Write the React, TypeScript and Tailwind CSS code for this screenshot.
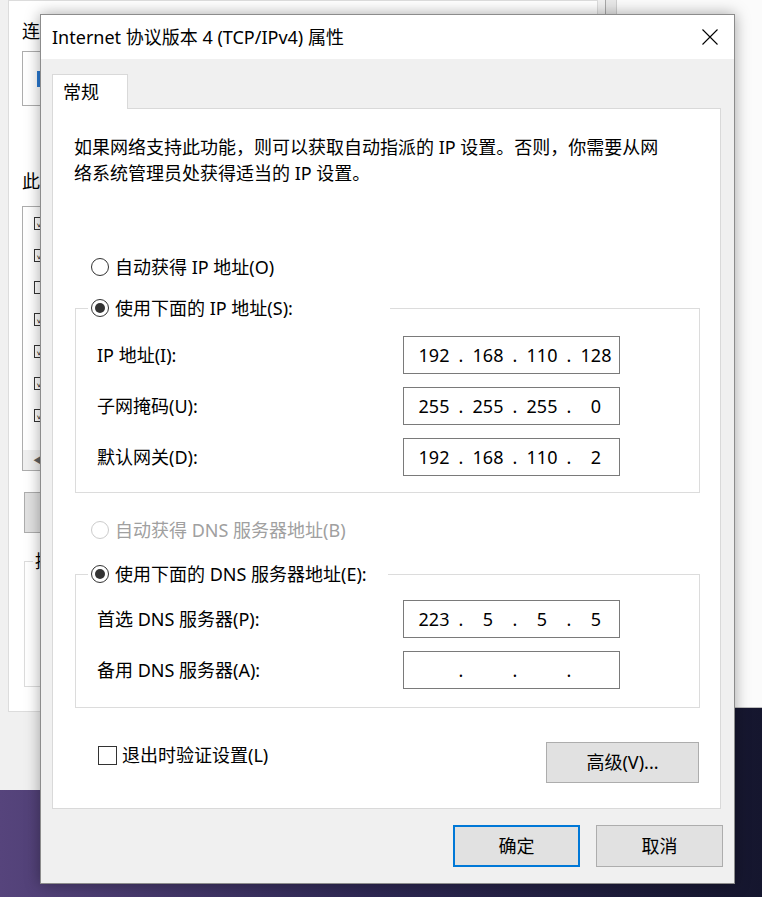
import React from 'react';

// Windows 10 style "Internet 协议版本 4" properties dialog, over a partly hidden adapter window

const font = "font-['Noto_Sans','Noto_Sans_CJK_SC',sans-serif]";

const Radio: React.FC<{ checked?: boolean; disabled?: boolean }> = ({ checked, disabled }) => (
    <span
        className={
            disabled
                ? 'w-[18px] h-[18px] shrink-0 rounded-full border border-[#cccccc] bg-white'
                : 'w-[18px] h-[18px] shrink-0 rounded-full border border-[#333333] bg-white flex items-center justify-center'
        }
    >
        {checked && <span className="w-[10px] h-[10px] rounded-full bg-[#333333]" />}
    </span>
);

const IpField: React.FC<{ parts: string[] }> = ({ parts }) => (
    <div className="w-[217px] h-[38px] shrink-0 border border-[#7a7a7a] bg-white flex items-center pl-[10px] text-[18px] text-black">
        {parts.map((p, i) => (
            <React.Fragment key={i}>
                {i > 0 && <span className="w-[14px] text-center">.</span>}
                <span className="w-[40px] text-center">{p}</span>
            </React.Fragment>
        ))}
    </div>
);

const FieldRow: React.FC<{ label: string; parts: string[] }> = ({ label, parts }) => (
    <div className="flex items-center">
        <span className="flex-1">{label}</span>
        <IpField parts={parts} />
    </div>
);

const GroupBox: React.FC<{ legend: string; legendWidth: string; children: React.ReactNode }> = ({ legend, legendWidth, children }) => (
    <fieldset className="ml-[22px] w-[625px] border border-[#dcdcdc] pl-[21px] pr-[79px]">
        <legend className={`-ml-[9px] ${legendWidth} h-[26px] pl-[3px] flex items-center gap-[6px]`}>
            <Radio checked />
            <span>{legend}</span>
        </legend>
        {children}
    </fieldset>
);

const ListCheck: React.FC<{ checked?: boolean }> = ({ checked }) => (
    <div className="h-[32px] flex items-center pl-[11px]">
        <span className="w-[13px] h-[13px] border border-[#333333] bg-white flex items-center justify-center text-[10px] leading-none">
            {checked ? '✓' : ''}
        </span>
    </div>
);

const App: React.FC = () => {
    return (
        <div className={`relative w-[762px] h-[897px] overflow-hidden bg-gradient-to-r from-[#56447c] via-[#2d2752] to-[#15162e] text-black ${font}`}>
            {/* window behind, right */}
            <div className="absolute left-[600px] top-0 w-[170px] h-[708px] bg-[#e8e8e8] border-b border-[#bdbdbd] pl-[16px]">
                <div className="h-full bg-[#fbfbfb] border-l border-[#cfcfcf]" />
            </div>

            {/* adapter properties window behind, left (only its left edge shows) */}
            <div className="absolute left-0 top-0 w-[606px] h-[790px] bg-[#f0f0f0] border-r border-[#a8a8a8] pl-[8px]">
                <div className="w-[590px] h-[712px] bg-white border border-[#dcdcdc] pl-[13px] pt-[17px] text-[18px]">
                    <div className="leading-[26px]">连</div>
                    <div className="mt-[7px] w-[560px] h-[55px] border border-[#adadad] bg-white flex items-center pl-[14px]">
                        <span className="w-[4px] h-[16px] bg-[#2a7ad2]" />
                    </div>
                    <div className="mt-[62px] leading-[26px]">此</div>
                    <div className="mt-[12px] w-[560px] h-[265px] border border-[#adadad] bg-white flex flex-col">
                        <div>
                            <ListCheck checked />
                            <ListCheck checked />
                            <ListCheck />
                            <ListCheck checked />
                            <ListCheck checked />
                            <ListCheck checked />
                            <ListCheck checked />
                        </div>
                        <div className="mt-auto h-[20px] bg-[#f0f0f0] flex items-center pl-[10px] text-[10px] text-[#606060]">◀</div>
                    </div>
                    <div className="mt-[21px] ml-[2px] w-[150px] h-[41px] bg-[#e1e1e1] border border-[#adadad]" />
                    <fieldset className="mt-[18px] ml-[2px] w-[560px] h-[136px] border border-[#dcdcdc]">
                        <legend className="ml-[8px] px-[2px] text-[18px] leading-[20px]">描</legend>
                    </fieldset>
                </div>
            </div>

            {/* dialog */}
            <div className="absolute left-[40px] top-[14px] w-[695px] h-[870px] border border-[#8c8c8c] bg-[#f0f0f0] shadow-[0_0_14px_rgba(0,0,0,0.35)] flex flex-col">
                <div className="h-[45px] bg-white flex items-center justify-between pl-[11px] pr-[16px]">
                    <span className="text-[18px]">Internet 协议版本 4 (TCP/IPv4) 属性</span>
                    <svg width="16" height="16" viewBox="0 0 16 16" className="text-black">
                        <path d="M0.5 0.5 L15.5 15.5 M15.5 0.5 L0.5 15.5" stroke="currentColor" strokeWidth="1.1" fill="none" />
                    </svg>
                </div>

                <div className="flex-1 px-[11px] pt-[15px] pb-[16px] flex flex-col text-[18px]">
                    <div className="relative z-10 -mb-px w-[76px] h-[35px] bg-white border border-b-0 border-[#d9d9d9] pl-[10px] flex items-center">
                        常规
                    </div>
                    <div className="w-[669px] h-[701px] bg-white border border-[#d9d9d9] px-[21px] pt-[25px] flex flex-col">
                        <p className="leading-[26px]">
                            如果网络支持此功能，则可以获取自动指派的 IP 设置。否则，你需要从网
                            <br />
                            络系统管理员处获得适当的 IP 设置。
                        </p>

                        <div className="mt-[68px] ml-[17px] h-[26px] flex items-center gap-[6px]">
                            <Radio />
                            <span>自动获得 IP 地址(O)</span>
                        </div>

                        <div className="mt-[15px] -ml-[21px]">
                            <GroupBox legend="使用下面的 IP 地址(S):" legendWidth="w-[302px]">
                                <div className="pt-[15px] pb-[16px] flex flex-col gap-[13px]">
                                    <FieldRow label="IP 地址(I):" parts={['192', '168', '110', '128']} />
                                    <FieldRow label="子网掩码(U):" parts={['255', '255', '255', '0']} />
                                    <FieldRow label="默认网关(D):" parts={['192', '168', '110', '2']} />
                                </div>
                            </GroupBox>
                        </div>

                        <div className="mt-[24px] ml-[17px] h-[26px] flex items-center gap-[6px] text-[#a0a0a0]">
                            <Radio disabled />
                            <span>自动获得 DNS 服务器地址(B)</span>
                        </div>

                        <div className="mt-[18px] -ml-[21px]">
                            <GroupBox legend="使用下面的 DNS 服务器地址(E):" legendWidth="w-[300px]">
                                <div className="pt-[13px] pb-[18px] flex flex-col gap-[13px]">
                                    <FieldRow label="首选 DNS 服务器(P):" parts={['223', '5', '5', '5']} />
                                    <FieldRow label="备用 DNS 服务器(A):" parts={['', '', '', '']} />
                                </div>
                            </GroupBox>
                        </div>

                        <div className="mt-[34px] flex items-start">
                            <div className="ml-[24px] h-[26px] flex items-center gap-[5px]">
                                <span className="w-[19px] h-[19px] border-[1.5px] border-[#333333] bg-white" />
                                <span>退出时验证设置(L)</span>
                            </div>
                            <button className="ml-auto w-[153px] h-[41px] bg-[#e1e1e1] border border-[#adadad]">
                                高级(V)...
                            </button>
                        </div>
                    </div>

                    <div className="mt-[16px] flex justify-end gap-[16px]">
                        <button className="w-[127px] h-[42px] bg-[#e1e1e1] border-2 border-[#0078d7]">确定</button>
                        <button className="w-[127px] h-[42px] bg-[#e1e1e1] border border-[#adadad]">取消</button>
                    </div>
                </div>
            </div>
        </div>
    );
};

export default App;
